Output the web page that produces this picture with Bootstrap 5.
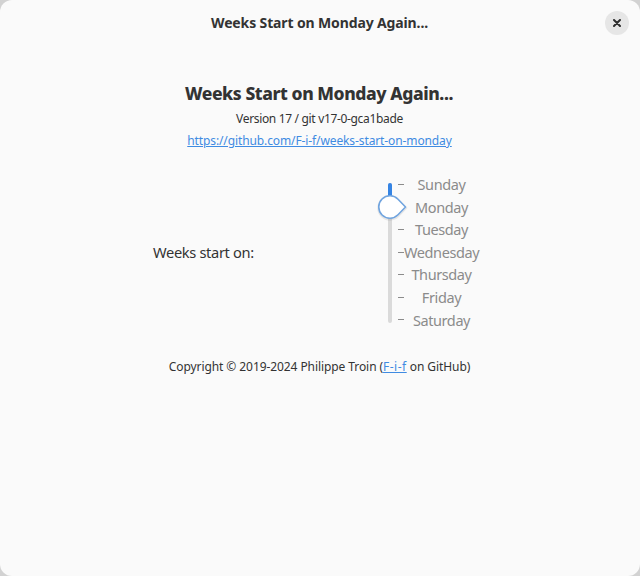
<!DOCTYPE html>
<html lang="en">
<head>
<meta charset="utf-8">
<meta name="viewport" content="width=device-width, initial-scale=1">
<title>Weeks Start on Monday Again...</title>
<link href="https://cdn.jsdelivr.net/npm/bootstrap@5.3.0/dist/css/bootstrap.min.css" rel="stylesheet">
<style>
body { background: #d2d2d2; font-family: "Noto Sans", sans-serif; color: #333; }
.window { height: 576px; background: #fafafa; border-radius: 12px; }
.titlebar { height: 46px; padding-right: 1px; }
.titlebar-text { font-size: 14px; font-weight: 700; line-height: 20px; letter-spacing: -.13px; }
.close-btn { width: 24px; height: 24px; right: 11px; top: 11px; background: #e6e6e6; color: #2e2e2e; }
.heading { font-size: 17.5px; font-weight: 800; line-height: 24px; margin-top: 35px; letter-spacing: -.43px; padding-right: 2px; }
.fine { font-size: 12px; line-height: 22px; padding-right: 1px; }
.fine a { color: #3f8be2; text-underline-offset: 1px; }
.version { margin-top: 3px; letter-spacing: -.33px; }
.site { letter-spacing: -.11px; }
.pref { margin-top: 21px; height: 159px; }
.pref-label { font-size: 14.67px; width: 167px; margin-left: 153px; padding-bottom: 2px; letter-spacing: -.35px; }
.scale { margin-left: 56px; }
.days { margin-left: -10px; }
.day { height: 22.6px; font-size: 14.5px; line-height: 22.6px; color: #8b8b8b; letter-spacing: -.4px; }
.tick { width: 6px; height: 1px; background: #8b8b8b; }
.day-name { width: 75px; }
.credit { margin-top: 24px; letter-spacing: -.08px; }
.credit a { letter-spacing: .5px; }
</style>
</head>
<body>
<main class="window overflow-hidden">
  <header class="titlebar position-relative d-flex align-items-center justify-content-center">
    <span class="titlebar-text">Weeks Start on Monday Again...</span>
    <button class="close-btn btn p-0 border-0 rounded-circle position-absolute d-flex align-items-center justify-content-center" aria-label="Close">
      <svg width="8" height="8" viewBox="0 0 8 8"><path d="M1 1L7 7M7 1L1 7" stroke="currentColor" stroke-width="2" stroke-linecap="round"/></svg>
    </button>
  </header>
  <h1 class="heading text-center mb-0">Weeks Start on Monday Again...</h1>
  <p class="fine version text-center mb-0">Version 17 / git v17-0-gca1bade</p>
  <p class="fine site text-center mb-0"><a href="#">https://github.com/F-i-f/weeks-start-on-monday</a></p>
  <section class="pref d-flex align-items-center">
    <label class="pref-label">Weeks start on:</label>
    <div class="scale d-flex">
      <svg width="32" height="159" viewBox="0 0 32 159" class="flex-shrink-0">
        <rect x="12" y="10" width="4" height="140" rx="2" fill="#dadada"/>
        <path d="M12 30V12a2 2 0 0 1 4 0V30Z" fill="#3584e4"/>
        <path d="M29.5 34L22 26.2A11.2 11.2 0 1 0 22 41.8Z" transform="translate(0 1)" fill="none" stroke="#000" stroke-opacity=".08" stroke-width="3"/>
        <path d="M29.5 34L22 26.2A11.2 11.2 0 1 0 22 41.8Z" fill="#fff" stroke="#70a4df" stroke-width="1.6" stroke-linejoin="round"/>
      </svg>
      <div class="days">
        <div class="day d-flex align-items-center"><span class="tick"></span><span class="day-name text-center">Sunday</span></div>
        <div class="day d-flex align-items-center"><span class="tick invisible"></span><span class="day-name text-center">Monday</span></div>
        <div class="day d-flex align-items-center"><span class="tick"></span><span class="day-name text-center">Tuesday</span></div>
        <div class="day d-flex align-items-center"><span class="tick"></span><span class="day-name text-center">Wednesday</span></div>
        <div class="day d-flex align-items-center"><span class="tick"></span><span class="day-name text-center">Thursday</span></div>
        <div class="day d-flex align-items-center"><span class="tick"></span><span class="day-name text-center">Friday</span></div>
        <div class="day d-flex align-items-center"><span class="tick"></span><span class="day-name text-center">Saturday</span></div>
      </div>
    </div>
  </section>
  <p class="fine credit text-center mb-0">Copyright © 2019-2024 Philippe Troin (<a href="#">F-i-f</a> on GitHub)</p>
</main>
<script src="https://cdn.jsdelivr.net/npm/bootstrap@5.3.0/dist/js/bootstrap.bundle.min.js"></script>
</body>
</html>
